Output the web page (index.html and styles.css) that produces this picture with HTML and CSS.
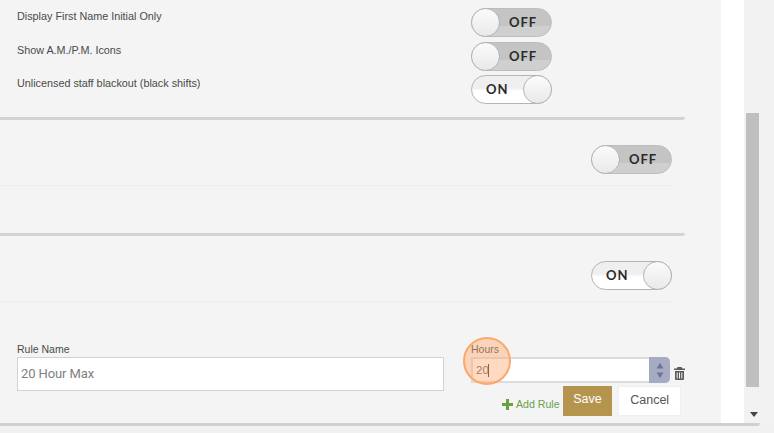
FILE: index.html
```html
<!DOCTYPE html>
<html lang="en">
<head>
<meta charset="utf-8">
<title>Settings</title>
<link rel="stylesheet" href="styles.css">
</head>
<body>
<div class="viewport">
  <div class="stage">
    <main class="panel">
      <section class="group group-first">
        <div class="row"><span class="label">Display First Name Initial Only</span><span class="toggle off"><b class="state">OFF</b><i class="knob"></i></span></div>
        <div class="row"><span class="label">Show A.M./P.M. Icons</span><span class="toggle off"><b class="state">OFF</b><i class="knob"></i></span></div>
        <div class="row"><span class="label">Unlicensed staff blackout (black shifts)</span><span class="toggle on"><b class="state">ON</b><i class="knob"></i></span></div>
      </section>
      <section class="group group-single">
        <div class="single"><span class="toggle off"><b class="state">OFF</b><i class="knob"></i></span></div>
      </section>
      <section class="group-rule">
        <div class="single"><span class="toggle on"><b class="state">ON</b><i class="knob"></i></span></div>
        <form class="rule">
          <div class="field name-field">
            <label class="field-label">Rule Name</label>
            <div class="name-input">20 Hour Max</div>
          </div>
          <div class="field hours-field">
            <label class="field-label">Hours</label>
            <div class="hours-line">
              <div class="hours-input"><span class="hours-value">20<i class="caret"></i></span><span class="spin"><svg width="8" height="15" viewBox="0 0 8 15"><path d="M4 0l3.500 5.500H.5zM4 15l3.500-5.500H.5z" fill="#6d7390"/></svg></span></div>
              <svg class="trash" width="11" height="13" viewBox="0 0 11 13"><path d="M3.500 0h4l.8 1.500H11V3H0V1.500h2.700zM1 4h9v8a1 1 0 0 1-1 1H2a1 1 0 0 1-1-1zm1.700 1.500v6h1v-6zm2.300 0v6h1v-6zm2.300 0v6h1v-6z" fill="#5c5c5c" fill-rule="evenodd"/></svg>
            </div>
            <span class="click-mark"></span>
            <div class="actions">
              <a class="add-rule"><svg width="11" height="11" viewBox="0 0 11 11"><path d="M4 0h3v4h4v3H7v4H4V7H0V4h4z" fill="#69a041"/></svg>Add Rule</a>
              <span class="btn save">Save</span>
              <span class="btn cancel">Cancel</span>
            </div>
          </div>
        </form>
      </section>
    </main>
    <div class="gutter"></div>
    <aside class="scrollbar"><div class="thumb"></div><svg class="arrow" width="8" height="5" viewBox="0 0 8 5"><path d="M0 0h8L4 5z" fill="#444"/></svg></aside>
  </div>
  <div class="footer"><div class="footer-line"></div></div>
</div>
</body>
</html>
```
FILE: styles.css
```css
* { box-sizing: border-box; }
html, body { margin: 0; height: 100%; }
body { background: #fff; font-family: "Liberation Sans", Arial, sans-serif; overflow: hidden; }
.viewport { width: 774px; height: 433px; display: flex; flex-direction: column; overflow: hidden; }
.stage { height: 423px; flex: none; display: flex; }
.panel { width: 721px; flex: none; background: #f4f4f4; overflow: hidden; }
.gutter { width: 23px; flex: none; background: #fff; }
.scrollbar { width: 30px; flex: none; background: #f2f2f2; padding: 113px 0 0 2px; display: flex; flex-direction: column; }
.thumb { width: 13px; height: 274px; background: #bfbfbf; }
.arrow { margin: 25px 0 0 4px; }
.footer { flex: 1; background: #f1f1f1; }
.footer-line { width: 760px; height: 3px; background: #d0d0d0; border-radius: 0 0 3px 0; }

.group { width: 685px; border-bottom: 3px solid #d3d3d3; border-bottom-right-radius: 3px; }
.group-first { height: 120px; padding: 8px 133px 0 17px; display: flex; flex-direction: column; }
.group-single { height: 116px; padding-top: 25px; }
.group-rule { height: 187px; padding-top: 25px; }
.row { display: flex; justify-content: space-between; height: 33.500px; align-items: flex-start; }
.label { font-size: 10.800px; line-height: 16px; color: #4a4a4a; }
.single { width: 672px; height: 41px; border-bottom: 1px solid #eeeeee; display: flex; justify-content: flex-end; }

.toggle { position: relative; display: block; width: 81px; height: 29px; border-radius: 15px; border: 1px solid #b4b4b4; flex: none; }
.toggle.off { background: linear-gradient(#c4c4c4 0 62%, #cfcfcf 62%); border-color: #bdbdbd; }
.toggle.on { background: linear-gradient(#efefef 0 45%, #fff 55%); }
.state { position: absolute; top: 0; font: 700 13px/27px "Lato", "Liberation Sans", sans-serif; letter-spacing: 1px; color: #2a2a2a; }
.off .state { left: 37px; }
.on .state { left: 14px; }
.knob { position: absolute; top: -1px; width: 29px; height: 29px; border-radius: 50%; border: 1px solid #b4b4b4; background: linear-gradient(#fbfbfb, #e9e9e9); }
.off .knob { left: -1px; }
.on .knob { right: -1px; }

.rule { display: flex; height: 88px; margin-top: 40px; padding-left: 17px; }
.field-label { display: block; font-size: 10.500px; line-height: 14px; color: #4a4a4a; }
.name-field { width: 427px; }
.name-input { height: 34px; margin-top: 1px; border: 1px solid #d2d2d2; background: #fff; padding-left: 3px; font-family: Roboto, "Liberation Sans", sans-serif; font-size: 13px; letter-spacing: -.1px; line-height: 31px; color: #808080; }
.hours-field { position: relative; width: 215px; margin-left: 27px; }
.hours-line { display: flex; align-items: flex-end; margin-top: 1px; }
.hours-input { width: 199px; height: 26px; display: flex; justify-content: space-between; background: #fff; border: 2px solid #dcdcdc; border-right: 0; border-radius: 0 4px 4px 0; }
.hours-value { padding-left: 3px; font-size: 11.500px; line-height: 22px; color: #5f5f5f; }
.caret { display: inline-block; width: 1px; height: 13px; margin-left: -1px; background: #333; vertical-align: middle; }
.spin { width: 21px; height: 26px; margin: -2px 0; background: #a6abc4; border-radius: 0 5px 5px 0; display: flex; align-items: center; justify-content: center; }
.trash { margin: 0 0 3px 4px; }
.click-mark { position: absolute; left: -8px; top: -5px; width: 48px; height: 48px; border-radius: 50%; background: rgba(255, 168, 105, .42); border: 2px solid #fba868; }
.actions { display: flex; align-items: flex-start; margin-top: 3px; width: 210px; }
.add-rule { display: flex; align-items: center; gap: 3px; width: 92px; margin-top: 11px; padding-left: 31px; white-space: nowrap; font-size: 10.600px; line-height: 14px; color: #6b9f4b; }
.btn { display: block; height: 30px; text-align: center; font-size: 12.500px; line-height: 26px; }
.save { width: 50px; background: #b5954d; color: #fff; }
.cancel { width: 63px; margin-left: 6px; background: #fff; border: 1px solid #efefef; color: #555; }
```
